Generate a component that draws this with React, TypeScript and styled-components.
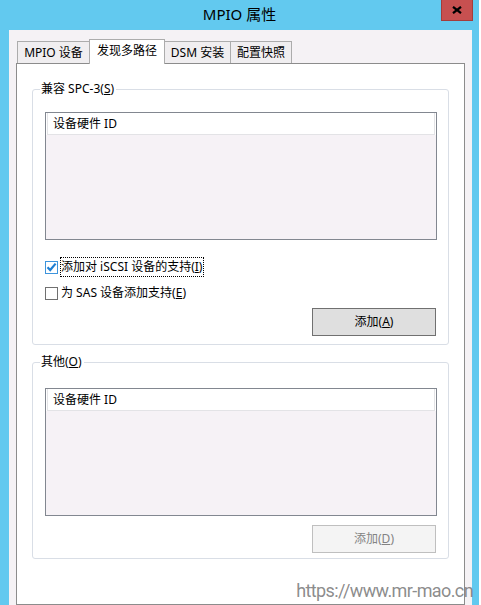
import React from "react";
import styled, { createGlobalStyle } from "styled-components";

const GlobalStyle = createGlobalStyle`
  html, body { margin: 0; padding: 0; background: #ffffff; }
  body {
    font-family: "Noto Sans", "Noto Sans CJK SC", sans-serif;
    font-size: 12px;
    color: #000;
  }
  * { box-sizing: border-box; }
`;

const Window = styled.div`
  position: relative;
  width: 479px;
  height: 605px;
  background: #62c9ef;
  display: flex;
  flex-direction: column;
  overflow: hidden;
`;

const TitleBar = styled.div`
  height: 30px;
  flex: none;
  display: grid;
  grid-template-columns: 1fr auto 1fr;
  align-items: start;
`;

const Title = styled.div`
  grid-column: 2;
  padding-top: 4px;
  font-size: 15px;
  line-height: 20px;
  color: #000;
`;

const CloseButton = styled.div`
  grid-column: 3;
  justify-self: end;
  margin-right: 6px;
  width: 32px;
  height: 21px;
  background: #c75050;
  border: 1px solid #a43c3c;
  border-top: none;
  display: flex;
  align-items: center;
  justify-content: center;
`;

const Client = styled.div`
  flex: 1;
  margin: 0 7px 0 9px;
  background: #f5f2f5;
  padding: 9px 7px 0 7px;
  display: flex;
  flex-direction: column;
  min-height: 0;
`;

const TabStrip = styled.div`
  height: 24px;
  flex: none;
  display: flex;
  align-items: flex-end;
  padding-left: 1px;
`;

const Tab = styled.div<{ $w: number; $active?: boolean; $first?: boolean }>`
  position: relative;
  z-index: ${(p) => (p.$active ? 2 : 1)};
  width: ${(p) => p.$w}px;
  height: ${(p) => (p.$active ? 25 : 22)}px;
  margin-left: ${(p) => (p.$first ? 0 : -1)}px;
  margin-bottom: ${(p) => (p.$active ? -1 : 0)}px;
  background: ${(p) => (p.$active ? "#ffffff" : "#f0eef0")};
  border: 1px solid #acacac;
  border-bottom: none;
  display: flex;
  align-items: center;
  justify-content: center;
  padding-bottom: ${(p) => (p.$active ? 3 : 0)}px;
  line-height: 16px;
  white-space: nowrap;
`;

const Panel = styled.div`
  flex: 1;
  background: #ffffff;
  border: 1px solid #8c8c8c;
  padding: 17px 15px 0 15px;
  display: flex;
  flex-direction: column;
`;

const Group = styled.fieldset<{ $top: number; $pt: number; $pb: number }>`
  margin: ${(p) => p.$top}px 0 0 0;
  border: 1px solid #d9dee6;
  border-radius: 3px;
  padding: ${(p) => p.$pt}px 11px ${(p) => p.$pb}px 12px;
  display: flex;
  flex-direction: column;
  min-width: 0;
`;

const Legend = styled.legend`
  margin-left: -5px;
  padding: 0 2px 0 1px;
  line-height: 16px;
  font-size: 12px;
`;

const ListBox = styled.div`
  height: 128px;
  border: 1px solid #828790;
  background: #f6f2f6;
  padding: 0 1px;
`;

const ListHeader = styled.div`
  height: 22px;
  background: #ffffff;
  border: 1px solid #e3e3e6;
  border-top: none;
  box-shadow: -1px 0 0 #fff, 1px 0 0 #fff;
  padding-left: 5px;
  display: flex;
  align-items: center;
  line-height: 16px;
`;

const CheckRow = styled.div<{ $mt: number }>`
  margin-top: ${(p) => p.$mt}px;
  height: 20px;
  display: flex;
  align-items: center;
  gap: 2px;
`;

const Box = styled.div<{ $checked?: boolean }>`
  width: 13px;
  height: 13px;
  flex: none;
  background: #ffffff;
  border: 1px solid ${(p) => (p.$checked ? "#3d94dc" : "#707070")};
  display: flex;
  align-items: center;
  justify-content: center;
`;

const CheckLabel = styled.span<{ $focus?: boolean }>`
  height: 20px;
  border: 1px ${(p) => (p.$focus ? "dotted #000" : "solid transparent")};
  padding: 0 1px 0 0;
  display: flex;
  align-items: center;
  line-height: 16px;
  white-space: nowrap;
`;

const Button = styled.div<{ $disabled?: boolean; $mt: number }>`
  align-self: flex-end;
  margin-top: ${(p) => p.$mt}px;
  margin-right: 1px;
  width: 124px;
  height: 28px;
  background: ${(p) => (p.$disabled ? "#f4f4f4" : "#dfdfdf")};
  border: 1px solid ${(p) => (p.$disabled ? "#bfbfbf" : "#707070")};
  color: ${(p) => (p.$disabled ? "#838383" : "#000")};
  display: flex;
  align-items: center;
  justify-content: center;
  line-height: 16px;
`;

const Watermark = styled.div`
  position: absolute;
  right: 6px;
  bottom: 3px;
  font-family: Roboto, "Noto Sans", sans-serif;
  font-size: 18px;
  letter-spacing: -0.6px;
  line-height: 22px;
  color: rgba(110, 110, 110, 0.8);
`;

function CheckMark() {
  return (
    <svg width="11" height="10" viewBox="0 0 11 10">
      <path d="M1.5 5.2 L4.2 8 L9.6 1.6" fill="none" stroke="#1f7fd3" strokeWidth="2.2" />
    </svg>
  );
}

export default function App() {
  return (
    <>
      <GlobalStyle />
      <Window>
        <TitleBar>
          <Title>MPIO 属性</Title>
          <CloseButton>
            <svg width="10" height="8" viewBox="0 0 10 8">
              <path d="M1 0.8 L9 7.2 M9 0.8 L1 7.2" stroke="#000" strokeWidth="2.2" />
            </svg>
          </CloseButton>
        </TitleBar>
        <Client>
          <TabStrip>
            <Tab $w={73} $first>MPIO 设备</Tab>
            <Tab $w={76} $active>发现多路径</Tab>
            <Tab $w={67}>DSM 安装</Tab>
            <Tab $w={62}>配置快照</Tab>
          </TabStrip>
          <Panel>
            <Group $top={0} $pt={15} $pb={8}>
              <Legend>
                兼容 SPC-3(<u>S</u>)
              </Legend>
              <ListBox>
                <ListHeader>设备硬件 ID</ListHeader>
              </ListBox>
              <CheckRow $mt={17}>
                <Box $checked>
                  <CheckMark />
                </Box>
                <CheckLabel $focus>
                  添加对 iSCSI 设备的支持(<u>I</u>)
                </CheckLabel>
              </CheckRow>
              <CheckRow $mt={6}>
                <Box />
                <CheckLabel>
                  为 SAS 设备添加支持(<u>E</u>)
                </CheckLabel>
              </CheckRow>
              <Button $mt={5}>
                添加(<u>A</u>)
              </Button>
            </Group>
            <Group $top={9} $pt={18} $pb={5}>
              <Legend>
                其他(<u>O</u>)
              </Legend>
              <ListBox>
                <ListHeader>设备硬件 ID</ListHeader>
              </ListBox>
              <Button $disabled $mt={9}>
                添加(<u>D</u>)
              </Button>
            </Group>
          </Panel>
        </Client>
        <Watermark>https://www.mr-mao.cn</Watermark>
      </Window>
    </>
  );
}
